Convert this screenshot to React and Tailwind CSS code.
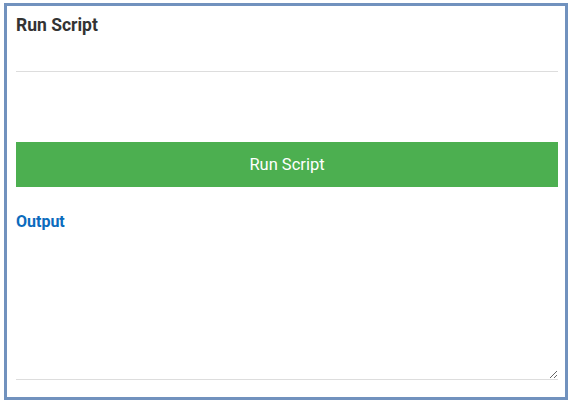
export default function App() {
  return (
    <div className="w-[574px] h-[406px] bg-white pt-[3px] pl-[4px]" style={{ fontFamily: 'Roboto, "Liberation Sans", sans-serif' }}>
      <div className="w-[564px] h-[397px] border-[3px] border-[#7192be] pl-[9px] pr-[7px] flex flex-col">
        <div className="h-[66px] pt-[9px] border-b border-[#dddddd]">
          <div className="text-[17.5px] leading-[20px] font-bold text-[#333333]">Run Script</div>
        </div>
        <button className="mt-[70px] h-[45px] w-full bg-[#4caf50] text-white text-[16.5px] leading-[20px] flex items-center justify-center">
          Run Script
        </button>
        <div className="mt-[25px] text-[16px] leading-[20px] font-bold text-[#0b6bbd]">Output</div>
        <textarea className="block w-full h-[148px] border-0 border-b border-[#dddddd] resize-y outline-none" />
      </div>
    </div>
  );
}
